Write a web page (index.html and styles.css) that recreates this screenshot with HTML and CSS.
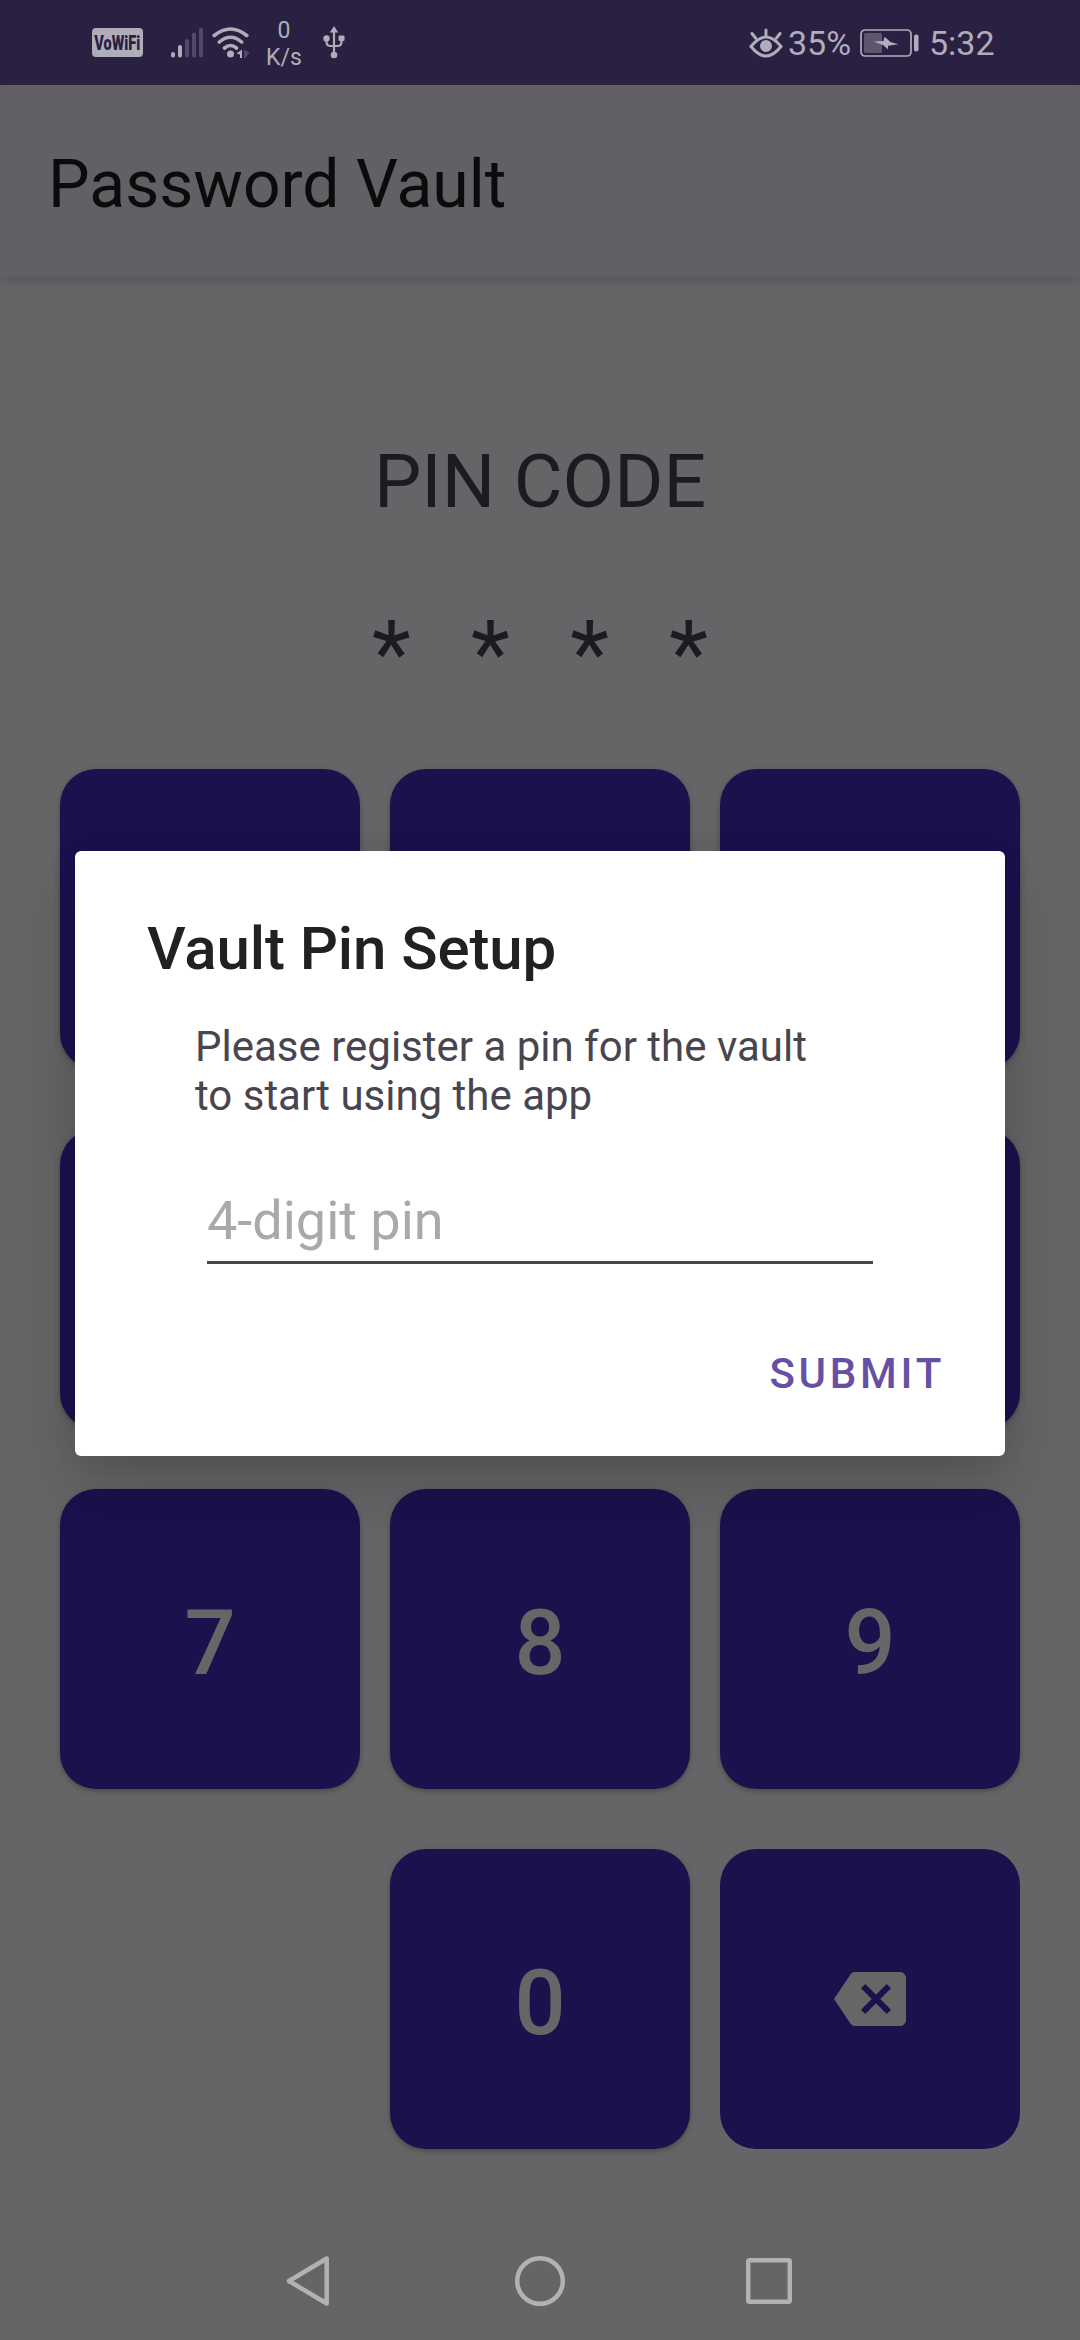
FILE: index.html
```html
<!DOCTYPE html>
<html lang="en">
<head>
<meta charset="utf-8">
<title>Password Vault</title>
<link rel="stylesheet" href="styles.css">
</head>
<body>
<div class="screen">
  <header class="status">
    <div class="status-left">
      <span class="vowifi"><span class="vowifi-text">VoWiFi</span></span>
      <svg class="signal" width="34" height="32" viewBox="0 0 34 32" stroke="#b0adba" stroke-width="4" stroke-linecap="round">
        <path d="M3 28.5v-1.500M10 28.500V20"/>
        <path stroke="#514a68" d="M17 28.500V14M24 28.500V7.500M31 28.500V2.500"/>
      </svg>
      <svg class="wifi" width="38" height="32" viewBox="0 0 38 32" fill="none" stroke="#b0adba" stroke-width="3.600" stroke-linecap="round">
        <path d="M2.200 8.500Q18.500-4.500 34.800 8.500M7.300 15Q18.500 5.500 29.700 15M12.500 21Q18.500 16 24.500 21"/>
        <circle cx="18.500" cy="27" r="3.500" fill="#b0adba" stroke="none"/>
        <path d="M30 22.500v8.500h-2v-3.500l-3.500-1z" fill="#b0adba" stroke="none"/>
        <path d="M32 22.500l5.500 3-4 5.500h-1.500z" fill="#514a68" stroke="none"/>
      </svg>
      <span class="speed"><span>0</span><span>K/s</span></span>
      <svg class="usb" width="22" height="33" viewBox="0 0 22 33" fill="#b0adba">
        <path d="M11 0l4.200 6.500H6.800z"/>
        <circle cx="3.500" cy="12.500" r="3.200"/><rect x="15.500" y="9.500" width="6" height="5.500" rx="1"/><circle cx="11" cy="29" r="3.300"/>
        <path d="M11 5v24M3.500 13v3q0 4 4 4h7q4 0 4-4v-3" fill="none" stroke="#b0adba" stroke-width="2.200"/>
      </svg>
    </div>
    <div class="status-right">
      <svg class="eye" width="34" height="30" viewBox="0 0 34 30" fill="none" stroke="#b0adba" stroke-width="3" stroke-linecap="round">
        <path d="M2 18.500Q17-.500 32 18.500Q17 37.500 2 18.500zM17 7V2M6.500 10L3 5.500M27.500 10L31 5.500"/>
        <circle cx="17" cy="18" r="6" fill="#b0adba" stroke="none"/>
      </svg>
      <span class="percent">35%</span>
      <svg class="battery" width="60" height="28" viewBox="0 0 60 28">
        <rect x="1" y="1" width="50" height="26" rx="4" fill="none" stroke="#b0adba" stroke-width="1.700"/>
        <rect x="4" y="4" width="18" height="20" rx="1.500" fill="#5d566e"/>
        <path d="M13.500 12.500l10-.500 1-4.300 6 5.300 8 2.300-10.500 1.400v3.800L23 16z" fill="#b0adba"/>
        <rect x="54" y="5.500" width="4.500" height="17" rx="2" fill="#b0adba"/>
      </svg>
      <span class="clock">5:32</span>
    </div>
  </header>
  <div class="appbar"><h1 class="app-title">Password Vault</h1></div>
  <main class="content">
    <div class="pin-label">PIN CODE</div>
    <div class="pin"><span>*</span><span>*</span><span>*</span><span>*</span></div>
    <div class="keypad">
      <div class="key"></div><div class="key"></div><div class="key"></div>
      <div class="key"></div><div class="key"></div><div class="key"></div>
      <div class="key">7</div><div class="key">8</div><div class="key">9</div>
      <div class="blank"></div><div class="key">0</div>
      <div class="key flat">
        <svg width="72" height="72" viewBox="0 0 24 24" fill="#666"><path d="M22 3H7c-.690 0-1.230.350-1.590.880L0 12l5.410 8.110c.360.530.900.890 1.590.890h15c1.100 0 2-.900 2-2V5c0-1.100-.900-2-2-2zm-3 12.590L17.590 17 14 13.410 10.410 17 9 15.590 12.590 12 9 8.410 10.410 7 14 10.590 17.590 7 19 8.410 15.410 12 19 15.590z"/></svg>
      </div>
    </div>
  </main>
  <nav class="nav">
    <svg width="44" height="52" viewBox="0 0 44 52"><path d="M3 26L40.700 3.500V48.500z"/></svg>
    <svg width="52" height="52" viewBox="0 0 52 52"><circle cx="26" cy="26" r="22.800"/></svg>
    <svg width="46" height="52" viewBox="0 0 46 52"><rect x="2.200" y="5.200" width="41.600" height="41.600" rx="1.500"/></svg>
  </nav>
  <section class="dialog" role="dialog">
    <h2 class="dialog-title">Vault Pin Setup</h2>
    <p class="message">Please register a pin for the vault<br>to start using the app</p>
    <div class="field">4-digit pin</div>
    <div class="actions"><span class="submit">SUBMIT</span></div>
  </section>
</div>
</body>
</html>
```
FILE: styles.css
```css
* { box-sizing: border-box; }
body { margin: 0; font-family: Roboto, sans-serif; }
h1, h2, p { margin: 0; font-weight: 400; }
svg { display: block; flex: none; }

.screen {
  position: relative;
  width: 1080px;
  height: 2340px;
  display: flex;
  flex-direction: column;
  overflow: hidden;
  background: #666467;
}

.status {
  height: 85px;
  flex: none;
  display: flex;
  justify-content: space-between;
  padding: 0 86px 0 92px;
  background: #2a2042;
  color: #b0adba;
}
.status-left, .status-right { display: flex; align-items: center; }
.vowifi {
  width: 51px;
  height: 29px;
  border-radius: 4px;
  background: #b0adba;
  color: #2a2042;
  display: flex;
  align-items: center;
  justify-content: center;
}
.vowifi-text { flex: none; font-size: 21px; font-weight: 900; transform: scaleX(.69); }
.signal { margin-left: 27px; }
.wifi { margin-left: 8px; }
.speed {
  width: 40px;
  margin-left: 14px;
  display: flex;
  flex-direction: column;
  text-align: center;
  font-size: 23px;
  line-height: 27px;
  padding-top: 2px;
}
.usb { margin-left: 19px; }
.percent { width: 63px; margin-left: 5px; font-size: 34px; white-space: nowrap; }
.battery { margin-left: 9px; }
.clock { margin-left: 9px; width: 65px; font-size: 34px; white-space: nowrap; }

.appbar {
  height: 192px;
  flex: none;
  display: flex;
  align-items: center;
  padding: 8px 48px 0;
  background: #625f65;
  box-shadow: 0 3px 9px rgba(60, 65, 55, .4);
}
.app-title { font-size: 66px; line-height: 78px; color: #0b0b0b; }

.content { height: 1943px; flex: none; color: #1d1b20; text-align: center; }
.pin-label { padding-top: 160px; font-size: 75px; line-height: 88px; }
.pin {
  display: flex;
  justify-content: center;
  gap: 60.300px;
  height: 105px;
  margin-top: 77px;
  font-size: 90px;
  line-height: 105px;
}
.keypad {
  display: grid;
  grid-template-columns: repeat(3, 300px);
  grid-auto-rows: 300px;
  gap: 60px 30px;
  justify-content: center;
  margin-top: 62px;
}
.key {
  display: flex;
  align-items: center;
  justify-content: center;
  border-radius: 36px;
  background: #1c104d;
  color: #666;
  font-size: 90px;
  font-weight: 500;
  padding-top: 9px;
  box-shadow: 0 2px 5px rgba(45, 50, 40, .5);
}
.key.flat { padding-top: 0; box-shadow: none; }

.nav {
  flex: 1;
  display: flex;
  padding: 2px 0 0 286px;
  align-items: center;
  gap: 184px;
  background: #656565;
  fill: none;
  stroke: #b2b2b2;
  stroke-width: 4.500;
  stroke-linejoin: round;
}
.nav svg:last-child { margin-left: -4px; }

.dialog {
  position: absolute;
  left: 75px;
  top: 851px;
  width: 930px;
  height: 605px;
  padding: 63px 60px 0 72px;
  border-radius: 6px;
  background: #fff;
  box-shadow: 0 28px 60px rgba(0, 0, 0, .18), 0 0 30px rgba(0, 0, 0, .05);
}
.dialog-title {
  font-size: 60px;
  line-height: 70px;
  font-weight: 500;
  letter-spacing: -.100px;
  color: #212121;
}
.message {
  margin: 38px 0 0 48px;
  font-size: 42px;
  line-height: 49px;
  color: #49454f;
}
.field {
  width: 666px;
  height: 84px;
  margin: 60px 0 0 60px;
  padding-top: 9px;
  border-bottom: 3px solid #49454f;
  font-size: 54px;
  line-height: 63px;
  color: #a9a9a9;
}
.actions { display: flex; justify-content: flex-end; margin-top: 85px; }
.submit {
  font-size: 42px;
  line-height: 49px;
  font-weight: 500;
  letter-spacing: 3.750px;
  color: #6750a4;
}
```
